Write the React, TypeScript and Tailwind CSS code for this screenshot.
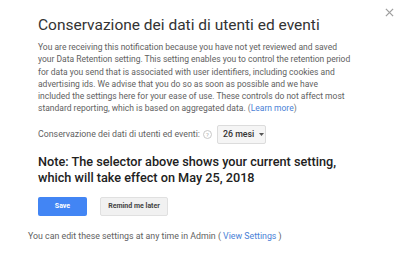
import React from "react";

function App() {
  return (
    <div className="relative w-[400px] h-[271px] bg-white font-['Roboto',sans-serif] overflow-hidden">
      <button className="absolute left-[385px] top-[8px] w-[9px] h-[9px] text-[#9e9e9e]">
        <svg viewBox="0 0 10 10" width="9" height="9">
          <path d="M1 1L9 9M9 1L1 9" stroke="currentColor" strokeWidth="1.4" />
        </svg>
      </button>
      <div className="pl-[38px] pr-[20px] pt-[15px]">
        <h1 className="text-[15.5px] leading-[20px] text-[#333] font-normal">
          Conservazione dei dati di utenti ed eventi
        </h1>
        <p className="mt-[6px] text-[8.5px] leading-[12.3px] text-[#616161] whitespace-nowrap">
          You are receiving this notification because you have not yet reviewed and saved
          <br />
          your Data Retention setting. This setting enables you to control the retention period
          <br />
          for data you send that is associated with user identifiers, including cookies and
          <br />
          advertising ids. We advise that you do so as soon as possible and we have
          <br />
          included the settings here for your ease of use. These controls do not affect most
          <br />
          standard reporting, which is based on aggregated data.{" "}
          <span className="text-[#757575]">(</span>
          <span className="text-[#4a7fd6]">Learn more</span>
          <span className="text-[#757575]">)</span>
        </p>
        <div className="mt-[10px] flex items-center text-[8.8px] text-[#616161]">
          <span>Conservazione dei dati di utenti ed eventi:</span>
          <span className="ml-[3px] w-[9px] h-[9px] rounded-full border border-[#c8c8c8] text-[6px] leading-[7px] text-[#b0b0b0] flex items-center justify-center">
            ?
          </span>
          <div className="ml-[5px] w-[49px] h-[19px] bg-[#f5f5f5] border border-[#dcdcdc] rounded-[2px] flex items-center pl-[5px] text-[#333] font-medium">
            26 mesi
            <svg className="ml-[5px]" width="5" height="3" viewBox="0 0 5 3">
              <path d="M0 0H5L2.5 3Z" fill="#555" />
            </svg>
          </div>
        </div>
        <div className="mt-[10px] text-[12.7px] leading-[16px] text-[#212121] font-medium">
          Note: The selector above shows your current setting,
          <br />
          which will take effect on May 25, 2018
        </div>
        <div className="mt-[11px] flex gap-[13px]">
          <button className="w-[49px] h-[19px] bg-[#4285f4] rounded-[2px] text-white text-[7px] font-bold">
            Save
          </button>
          <button className="w-[68px] h-[19px] bg-[#f1f1f1] border border-[#e0e0e0] rounded-[2px] text-[#444] text-[7px] font-bold">
            Remind me later
          </button>
        </div>
      </div>
      <div className="pl-[28px] mt-[14px] text-[8.8px] leading-[12px] text-[#616161]">
        You can edit these settings at any time in Admin ({" "}
        <span className="text-[#4a7fd6]">View Settings</span> )
      </div>
    </div>
  );
}

export default App;
